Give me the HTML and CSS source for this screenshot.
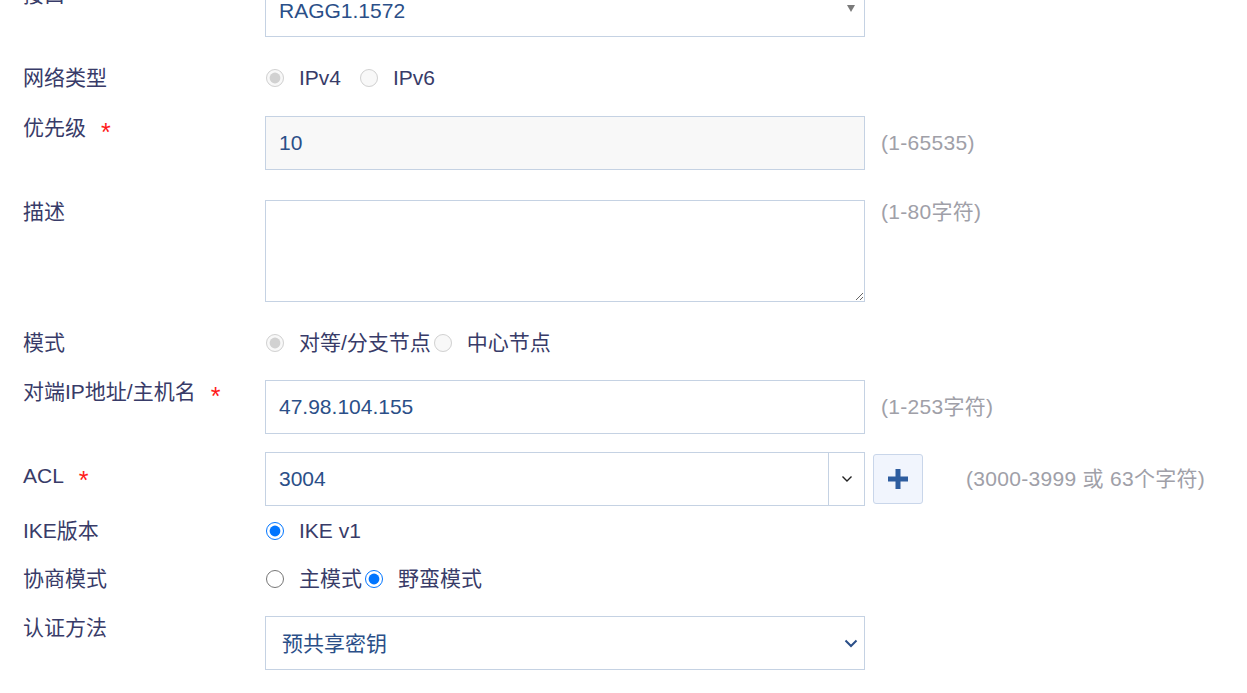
FILE: index.html
```html
<!DOCTYPE html>
<html lang="zh-CN">
  <head>
    <meta charset="UTF-8" />
    <meta name="viewport" content="width=device-width, initial-scale=1.0" />
    <title>IPSec 策略</title>
    <link rel="stylesheet" href="styles.css">
  </head>
  <body>
    <div class="form">
      <div class="row row-first">
        <label class="label" for="iface">接口</label>
        <div class="select-wrap">
          <select id="iface" class="field select">
            <option>RAGG1.1572</option>
          </select>
          <span class="caret-solid"></span>
        </div>
      </div>

      <div class="row row-radio gap-26">
        <span class="label">网络类型</span>
        <div class="radios spaced">
          <label class="radio"><input type="radio" name="ipver" checked disabled /><span>IPv4</span></label>
          <label class="radio"><input type="radio" name="ipver" disabled /><span>IPv6</span></label>
        </div>
      </div>

      <div class="row gap-23">
        <label class="label" for="priority">优先级<span class="req">*</span></label>
        <input type="text" id="priority" class="field" value="10" disabled />
        <span class="hint">(1-65535)</span>
      </div>

      <div class="row gap-30">
        <label class="label" for="desc">描述</label>
        <textarea id="desc" class="field area"></textarea>
        <span class="hint hint-top">(1-80字符)</span>
      </div>

      <div class="row row-radio gap-26">
        <span class="label">模式</span>
        <div class="radios">
          <label class="radio"><input type="radio" name="mode" checked disabled /><span>对等/分支节点</span></label>
          <label class="radio"><input type="radio" name="mode" disabled /><span>中心节点</span></label>
        </div>
      </div>

      <div class="row gap-22">
        <label class="label" for="peer">对端IP地址/主机名<span class="req">*</span></label>
        <input type="text" id="peer" class="field" value="47.98.104.155" />
        <span class="hint">(1-253字符)</span>
      </div>

      <div class="row gap-18">
        <label class="label label-low" for="acl">ACL<span class="req">*</span></label>
        <div class="combo">
          <input type="text" id="acl" class="combo-input" value="3004" />
          <button type="button" class="combo-btn">
            <svg width="12" height="8" viewBox="0 0 12 8"><path d="M1.5 1.5l4.5 4.5 4.5-4.5" fill="none" stroke="#222" stroke-width="1.4"/></svg>
          </button>
        </div>
        <button type="button" class="add-btn">
          <svg width="20" height="20" viewBox="0 0 20 20"><path d="M10 0v20M0 10h20" stroke="#2e5d9f" stroke-width="5"/></svg>
        </button>
        <span class="hint hint-acl">(3000-3999 或 63个字符)</span>
      </div>

      <div class="row row-radio gap-10">
        <span class="label">IKE版本</span>
        <div class="radios">
          <label class="radio"><input type="radio" name="ike" checked /><span>IKE v1</span></label>
        </div>
      </div>

      <div class="row row-radio gap-18">
        <span class="label">协商模式</span>
        <div class="radios">
          <label class="radio"><input type="radio" name="nego" /><span>主模式</span></label>
          <label class="radio"><input type="radio" name="nego" checked /><span>野蛮模式</span></label>
        </div>
      </div>

      <div class="row gap-22">
        <label class="label" for="auth">认证方法</label>
        <div class="select-wrap">
          <select id="auth" class="field select select-auth">
            <option>预共享密钥</option>
          </select>
          <svg class="chevron" width="14" height="9" viewBox="0 0 14 9"><path d="M1.5 1.5l5.5 5.5 5.5-5.5" fill="none" stroke="#2b4f88" stroke-width="2"/></svg>
        </div>
      </div>
    </div>
  </body>
</html>
```

FILE: styles.css
```css
* {
  box-sizing: border-box;
}

body {
  margin: 0;
  font-family: "Liberation Sans", "Noto Sans CJK SC", sans-serif;
  font-size: 21px;
  color: #383b68;
  background-color: #fff;
  overflow: hidden;
}

.form {
  margin-top: -17px;
  padding-left: 23px;
}

.row {
  display: flex;
  align-items: flex-start;
}

.gap-10 { margin-top: 10px; }
.gap-18 { margin-top: 18px; }
.gap-22 { margin-top: 22px; }
.gap-23 { margin-top: 23px; }
.gap-26 { margin-top: 26px; }
.gap-30 { margin-top: 30px; }

.label {
  flex: 0 0 242px;
  line-height: 23px;
}

.label-low {
  padding-top: 12px;
}

.req {
  color: #ff1a1a;
  font-size: 25px;
  margin-left: 15px;
  vertical-align: -6px;
  line-height: 0;
}

.row-radio {
  height: 30px;
  align-items: center;
}

.row-radio .label {
  line-height: 30px;
}

.field {
  width: 600px;
  height: 54px;
  padding: 0 13px;
  border: 1px solid #c5d2e3;
  border-radius: 0;
  font: inherit;
  color: #2b4f88;
  background-color: #fff;
  outline: none;
}

.field[disabled] {
  background-color: #f8f8f8;
}

.area {
  height: 102px;
  padding: 10px 13px;
  resize: both;
}

.hint {
  margin-left: 16px;
  line-height: 54px;
  color: #a0a0a8;
  letter-spacing: 0.3px;
  white-space: nowrap;
}

.hint-top {
  line-height: 23px;
}

.hint-acl {
  margin-left: 43px;
}

.select-wrap {
  position: relative;
}

.select {
  appearance: none;
  -webkit-appearance: none;
}

.select-auth {
  padding-left: 16px;
}

.caret-solid {
  position: absolute;
  right: 10px;
  top: 22px;
  border-left: 4px solid transparent;
  border-right: 4px solid transparent;
  border-top: 7px solid #7a7a7a;
}

.chevron {
  position: absolute;
  right: 7px;
  top: 23px;
}

.radios {
  display: flex;
  align-items: center;
}

.radio {
  display: flex;
  align-items: center;
  line-height: 30px;
}

.radio input {
  width: 18px;
  height: 18px;
  margin: 0 15px 0 1px;
}

.radio + .radio {
  margin-left: 2px;
}

.spaced .radio + .radio {
  margin-left: 18px;
}

.combo {
  display: flex;
  width: 600px;
  height: 54px;
  border: 1px solid #c5d2e3;
}

.combo-input {
  flex: 1;
  min-width: 0;
  padding: 0 13px;
  border: none;
  font: inherit;
  color: #2b4f88;
  outline: none;
}

.combo-btn {
  flex: 0 0 36px;
  display: flex;
  align-items: center;
  justify-content: center;
  padding: 0;
  border: none;
  border-left: 1px solid #c5d2e3;
  background-color: #fff;
}

.add-btn {
  width: 50px;
  height: 50px;
  margin: 2px 0 0 8px;
  padding: 0;
  display: flex;
  align-items: center;
  justify-content: center;
  border: 1px solid #c9d6ea;
  border-radius: 3px;
  background-color: #f1f5fd;
}
```
